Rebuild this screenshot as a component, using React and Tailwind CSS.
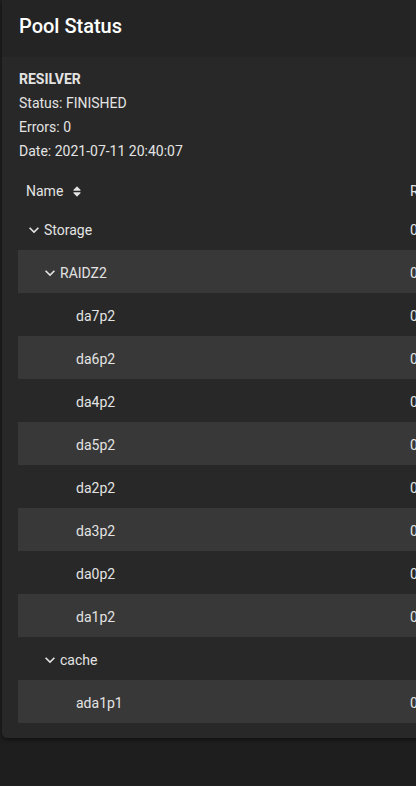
import React from 'react';
import { FaSort } from 'react-icons/fa';

const rows = [
    { name: 'Storage', level: 0, group: true },
    { name: 'RAIDZ2', level: 1, group: true },
    { name: 'da7p2', level: 2 },
    { name: 'da6p2', level: 2 },
    { name: 'da4p2', level: 2 },
    { name: 'da5p2', level: 2 },
    { name: 'da2p2', level: 2 },
    { name: 'da3p2', level: 2 },
    { name: 'da0p2', level: 2 },
    { name: 'da1p2', level: 2 },
    { name: 'cache', level: 1, group: true, empty: true },
    { name: 'ada1p1', level: 2 },
];

const indent = ['pl-[6px]', 'pl-[22px]', 'pl-[38px]'];

// material "expand_more"
function Chevron() {
    return (
        <svg width="20" height="20" viewBox="0 0 24 24" className="shrink-0" fill="currentColor">
            <path d="M16.59 8.59L12 13.17 7.41 8.59 6 10l6 6 6-6z" />
        </svg>
    );
}

export default function App() {
    return (
        <div className="min-h-screen w-[416px] overflow-hidden bg-[#1e1e1e] pl-[2px] font-['Roboto',sans-serif] text-[#e3e3e3]">
            <div className="w-[700px] rounded-bl-[5px] bg-[#282828] pb-[15px] shadow-[0_2px_4px_rgba(0,0,0,0.45)]">
                <header className="h-[57px] bg-[#242424] px-[17px] pt-[12px]">
                    <h1 className="text-[20px] leading-[28px] font-medium text-white">Pool Status</h1>
                </header>

                <div className="px-[17px] pt-[10px] text-[14px] leading-[24px]">
                    <div className="font-bold">RESILVER</div>
                    <div>Status: FINISHED</div>
                    <div>Errors: 0</div>
                    <div>Date: 2021-07-11 20:40:07</div>
                </div>

                <div className="mt-[8px] pl-4 text-[14px]">
                    <div className="flex h-[36px] items-center pt-[5px]">
                        <div className="flex w-[392px] items-center gap-[10px] pl-2">
                            <span>Name</span>
                            <FaSort className="h-[13px] w-[8px] text-[#e3e3e3]" />
                        </div>
                        <div>Read</div>
                    </div>
                    {rows.map((row, i) => (
                        <div key={row.name} className={`flex h-[43px] items-center pt-[3px] ${i % 2 === 1 ? 'bg-[#383838]' : ''}`}>
                            <div className={`flex w-[392px] items-center ${indent[row.level]}`}>
                                {row.group ? <Chevron /> : <span className="w-[20px]" />}
                                <span>{row.name}</span>
                            </div>
                            <div>{row.empty ? '' : '0'}</div>
                        </div>
                    ))}
                </div>
            </div>
        </div>
    );
}
